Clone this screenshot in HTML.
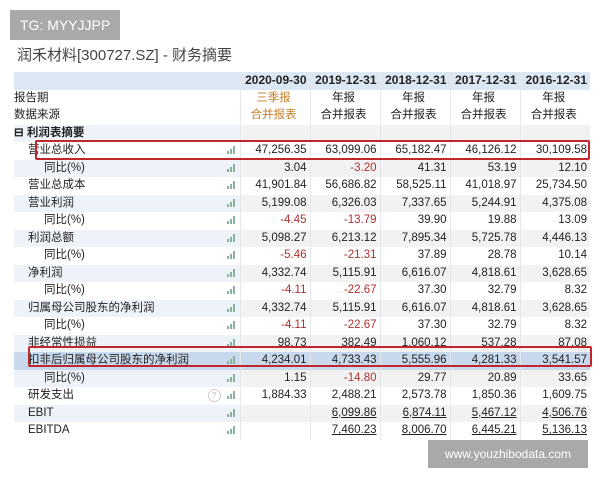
<!DOCTYPE html>
<html><head><meta charset="utf-8"><style>
body{margin:0;width:600px;height:480px;background:#fff;position:relative;overflow:hidden;font-family:"Liberation Sans","Noto Sans CJK SC",sans-serif;}
.tg{position:absolute;left:10px;top:10px;width:110px;height:30px;background:#a9a9a9;color:#fff;font-size:14px;line-height:30px;text-indent:10px;}
.title{position:absolute;left:17px;top:44px;font-size:15px;color:#444;}
.wm{position:absolute;left:428px;top:440px;width:160px;height:28px;background:#a9a9a9;color:#fff;font-size:12px;line-height:28px;text-align:center;}
table{position:absolute;left:14px;top:72px;width:576px;border-collapse:collapse;font-size:11.5px;color:#222;table-layout:fixed;}
td{height:17.5px;padding:0;white-space:nowrap;overflow:hidden;line-height:17px;box-sizing:border-box;}
td.n{text-align:right;padding-right:3px;border-left:1px solid #e4e8ec;}
td.i{text-align:right;padding-right:4px;}
.bar{display:inline-block;width:9px;height:8px;vertical-align:middle;position:relative;}
.bar i{position:absolute;bottom:0;width:2px;background:#8cb0a0;}
tr.s td{background:#f2f2f2}
tr.s td.l,tr.s td.i{background:#edf3f8}
tr.h td{background:#dbe7f3;font-weight:bold;color:#222;text-align:right;font-size:12px;}
.o{color:#c87d2a}
.r{color:#b03030}
.u{text-decoration:underline}
.c{text-align:center!important}
.p1{padding-left:14px}.p2{padding-left:30px}
.box{position:absolute;border:2px solid #c0272d;border-radius:2px;}
tr.b td{background:#c8d9ee}
</style></head><body>
<div class="tg">TG: MYYJJPP</div>
<div class="title">润禾材料[300727.SZ] - 财务摘要</div>
<table>
<colgroup><col style="width:198px"><col style="width:28px"><col style="width:70px"><col style="width:70px"><col style="width:70px"><col style="width:70px"><col style="width:70px"></colgroup>
<tr class="h"><td></td><td></td><td class="n o">2020-09-30</td><td class="n">2019-12-31</td><td class="n">2018-12-31</td><td class="n">2017-12-31</td><td class="n">2016-12-31</td></tr>
<tr><td class="l">报告期</td><td class="i"></td><td class="n o c">三季报</td><td class="n c">年报</td><td class="n c">年报</td><td class="n c">年报</td><td class="n c">年报</td></tr>
<tr><td class="l">数据来源</td><td class="i"></td><td class="n o c">合并报表</td><td class="n c">合并报表</td><td class="n c">合并报表</td><td class="n c">合并报表</td><td class="n c">合并报表</td></tr>
<tr class="s"><td class="l" style="font-weight:bold">⊟ 利润表摘要</td><td class="i"></td><td class="n"></td><td class="n"></td><td class="n"></td><td class="n"></td><td class="n"></td></tr>
<tr><td class="l p1">营业总收入</td><td class="i"><span class="bar"><i style="left:0;height:3px"></i><i style="left:3px;height:5px"></i><i style="left:6px;height:8px"></i></span></td><td class="n">47,256.35</td><td class="n">63,099.06</td><td class="n">65,182.47</td><td class="n">46,126.12</td><td class="n">30,109.58</td></tr>
<tr class="s"><td class="l p2">同比(%)</td><td class="i"><span class="bar"><i style="left:0;height:3px"></i><i style="left:3px;height:5px"></i><i style="left:6px;height:8px"></i></span></td><td class="n">3.04</td><td class="n r">-3.20</td><td class="n">41.31</td><td class="n">53.19</td><td class="n">12.10</td></tr>
<tr><td class="l p1">营业总成本</td><td class="i"><span class="bar"><i style="left:0;height:3px"></i><i style="left:3px;height:5px"></i><i style="left:6px;height:8px"></i></span></td><td class="n">41,901.84</td><td class="n">56,686.82</td><td class="n">58,525.11</td><td class="n">41,018.97</td><td class="n">25,734.50</td></tr>
<tr class="s"><td class="l p1">营业利润</td><td class="i"><span class="bar"><i style="left:0;height:3px"></i><i style="left:3px;height:5px"></i><i style="left:6px;height:8px"></i></span></td><td class="n">5,199.08</td><td class="n">6,326.03</td><td class="n">7,337.65</td><td class="n">5,244.91</td><td class="n">4,375.08</td></tr>
<tr><td class="l p2">同比(%)</td><td class="i"><span class="bar"><i style="left:0;height:3px"></i><i style="left:3px;height:5px"></i><i style="left:6px;height:8px"></i></span></td><td class="n r">-4.45</td><td class="n r">-13.79</td><td class="n">39.90</td><td class="n">19.88</td><td class="n">13.09</td></tr>
<tr class="s"><td class="l p1">利润总额</td><td class="i"><span class="bar"><i style="left:0;height:3px"></i><i style="left:3px;height:5px"></i><i style="left:6px;height:8px"></i></span></td><td class="n">5,098.27</td><td class="n">6,213.12</td><td class="n">7,895.34</td><td class="n">5,725.78</td><td class="n">4,446.13</td></tr>
<tr><td class="l p2">同比(%)</td><td class="i"><span class="bar"><i style="left:0;height:3px"></i><i style="left:3px;height:5px"></i><i style="left:6px;height:8px"></i></span></td><td class="n r">-5.46</td><td class="n r">-21.31</td><td class="n">37.89</td><td class="n">28.78</td><td class="n">10.14</td></tr>
<tr class="s"><td class="l p1">净利润</td><td class="i"><span class="bar"><i style="left:0;height:3px"></i><i style="left:3px;height:5px"></i><i style="left:6px;height:8px"></i></span></td><td class="n">4,332.74</td><td class="n">5,115.91</td><td class="n">6,616.07</td><td class="n">4,818.61</td><td class="n">3,628.65</td></tr>
<tr><td class="l p2">同比(%)</td><td class="i"><span class="bar"><i style="left:0;height:3px"></i><i style="left:3px;height:5px"></i><i style="left:6px;height:8px"></i></span></td><td class="n r">-4.11</td><td class="n r">-22.67</td><td class="n">37.30</td><td class="n">32.79</td><td class="n">8.32</td></tr>
<tr class="s"><td class="l p1">归属母公司股东的净利润</td><td class="i"><span class="bar"><i style="left:0;height:3px"></i><i style="left:3px;height:5px"></i><i style="left:6px;height:8px"></i></span></td><td class="n">4,332.74</td><td class="n">5,115.91</td><td class="n">6,616.07</td><td class="n">4,818.61</td><td class="n">3,628.65</td></tr>
<tr><td class="l p2">同比(%)</td><td class="i"><span class="bar"><i style="left:0;height:3px"></i><i style="left:3px;height:5px"></i><i style="left:6px;height:8px"></i></span></td><td class="n r">-4.11</td><td class="n r">-22.67</td><td class="n">37.30</td><td class="n">32.79</td><td class="n">8.32</td></tr>
<tr class="s"><td class="l p1">非经常性损益</td><td class="i"><span class="bar"><i style="left:0;height:3px"></i><i style="left:3px;height:5px"></i><i style="left:6px;height:8px"></i></span></td><td class="n">98.73</td><td class="n">382.49</td><td class="n">1,060.12</td><td class="n">537.28</td><td class="n">87.08</td></tr>
<tr class="b"><td class="l p1">扣非后归属母公司股东的净利润</td><td class="i"><span class="bar"><i style="left:0;height:3px"></i><i style="left:3px;height:5px"></i><i style="left:6px;height:8px"></i></span></td><td class="n">4,234.01</td><td class="n">4,733.43</td><td class="n">5,555.96</td><td class="n">4,281.33</td><td class="n">3,541.57</td></tr>
<tr class="s"><td class="l p2">同比(%)</td><td class="i"><span class="bar"><i style="left:0;height:3px"></i><i style="left:3px;height:5px"></i><i style="left:6px;height:8px"></i></span></td><td class="n">1.15</td><td class="n r">-14.80</td><td class="n">29.77</td><td class="n">20.89</td><td class="n">33.65</td></tr>
<tr><td class="l p1">研发支出</td><td class="i" style="overflow:visible"><span style="position:relative;left:-6px;display:inline-block;width:11px;height:11px;border:1px solid #ccc;border-radius:50%;font-size:8px;line-height:11px;text-align:center;color:#bbb;vertical-align:middle">?</span><span class="bar"><i style="left:0;height:3px"></i><i style="left:3px;height:5px"></i><i style="left:6px;height:8px"></i></span></td><td class="n">1,884.33</td><td class="n">2,488.21</td><td class="n">2,573.78</td><td class="n">1,850.36</td><td class="n">1,609.75</td></tr>
<tr class="s"><td class="l p1">EBIT</td><td class="i"><span class="bar"><i style="left:0;height:3px"></i><i style="left:3px;height:5px"></i><i style="left:6px;height:8px"></i></span></td><td class="n"></td><td class="n u">6,099.86</td><td class="n u">6,874.11</td><td class="n u">5,467.12</td><td class="n u">4,506.76</td></tr>
<tr><td class="l p1">EBITDA</td><td class="i"><span class="bar"><i style="left:0;height:3px"></i><i style="left:3px;height:5px"></i><i style="left:6px;height:8px"></i></span></td><td class="n"></td><td class="n u">7,460.23</td><td class="n u">8,006.70</td><td class="n u">6,445.21</td><td class="n u">5,136.13</td></tr>
<tr class="s"><td class="l" style="font-weight:bold">⊟ 资产负债表摘要</td><td class="i"></td><td class="n"></td><td class="n"></td><td class="n"></td><td class="n"></td><td class="n"></td></tr>
</table>
<div style="position:absolute;left:0;top:440px;width:600px;height:40px;background:#fff"></div>
<div class="wm">www.youzhibodata.com</div>
<div class="box" style="left:35px;top:140px;width:551px;height:16px"></div>
<div class="box" style="left:28px;top:346px;width:560px;height:17px"></div>
</body></html>
